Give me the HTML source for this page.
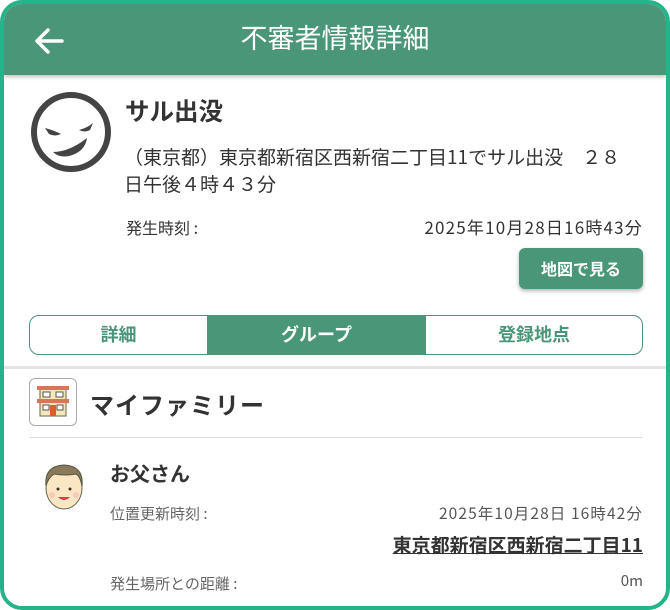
<!DOCTYPE html>
<html><head><meta charset="utf-8"><style>
*{margin:0;padding:0;box-sizing:border-box}
body{width:670px;height:610px;overflow:hidden;background:#fff;font-family:"Noto Sans CJK JP","Liberation Sans",sans-serif;color:#333}
.frame{position:absolute;left:0;top:0;width:670px;height:610px;border:4px solid #25b38a;border-radius:22px;overflow:hidden;background:#fff}
.hdr{position:absolute;left:0;top:0;width:662px;height:71px;background:#4a9679;box-shadow:0 2px 4px rgba(0,0,0,.25)}
.hdr .t{position:absolute;left:0;right:0;top:13px;text-align:center;color:#fff;font-size:27px;line-height:40px}
.a{position:absolute;line-height:1.3}
</style></head><body><div class="frame">
<div class="hdr"><svg class="a" style="left:28px;top:20px" width="34" height="34" viewBox="0 0 34 34"><path d="M30 17H6M16 6L5 17l11 11" stroke="#fff" stroke-width="3.5" fill="none" stroke-linecap="round" stroke-linejoin="round"/></svg><div class="t">不審者情報詳細</div></div>
<svg class="a" style="left:25px;top:86px" width="84" height="84" viewBox="0 0 84 84"><circle cx="42" cy="42" r="37" stroke="#444" stroke-width="6" fill="none"/><path d="M16 38q8 2 16 6q-6 3-12 0z" fill="#444"/><path d="M64 33q-6 5-14 7q6 3 11 0z" fill="#444"/><path d="M24 62q16 0 34-14q-2 14-18 18q-10 2-16-4z" fill="#444"/></svg>
<div class="a" style="left:121px;top:91px;font-size:24.5px;font-weight:bold;color:#333">サル出没</div>
<div class="a" style="left:120px;top:139px;font-size:19px;line-height:27px;width:545px;color:#333;white-space:nowrap">（東京都）東京都新宿区西新宿二丁目11でサル出没　２８<br>日午後４時４３分</div>
<div class="a" style="left:122px;top:213px;font-size:16px;color:#333">発生時刻 :</div>
<div class="a" style="right:23px;top:212px;font-size:17px;letter-spacing:1.2px;color:#333">2025年10月28日16時43分</div>
<div class="a" style="left:515px;top:244px;width:124px;height:41px;background:#4a9679;border-radius:6px;box-shadow:0 2px 4px rgba(0,0,0,.3);color:#fff;font-weight:bold;font-size:16px;text-align:center;line-height:41px">地図で見る</div>
<div class="a" style="left:25px;top:311px;width:614px;height:40px;border:1.5px solid #4a9679;border-radius:10px;overflow:hidden;display:flex;font-weight:bold;font-size:18px;color:#4a9679">
<div style="width:177px;text-align:center;line-height:37px">詳細</div>
<div style="width:219px;text-align:center;line-height:37px;background:#4a9679;color:#fff">グループ</div>
<div style="flex:1;text-align:center;line-height:37px">登録地点</div></div>
<div class="a" style="left:0;top:362px;width:662px;height:3px;background:#e4e4e4"></div>
<div class="a" style="left:25px;top:374px;width:48px;height:48px;border:1px solid #aaa;border-radius:6px;background:#fff">
<svg width="46" height="46" viewBox="0 0 46 46"><rect x="10" y="9" width="26" height="28" fill="#f5e8b8" stroke="#665" stroke-width="1"/><rect x="7" y="7" width="32" height="4" fill="#d9765a"/><rect x="7" y="20" width="32" height="4" fill="#d9765a"/><rect x="13" y="13" width="7" height="5" fill="#fff" stroke="#555"/><rect x="26" y="13" width="7" height="5" fill="#fff" stroke="#555"/><rect x="13" y="26" width="6" height="5" fill="#fff" stroke="#555"/><rect x="27" y="26" width="6" height="5" fill="#fff" stroke="#555"/><rect x="20" y="26" width="6" height="11" fill="#d9602a"/></svg></div>
<div class="a" style="left:86px;top:384px;font-size:24px;font-weight:bold;color:#333;letter-spacing:1px">マイファミリー</div>
<div class="a" style="left:25px;top:433px;width:614px;height:1px;background:#ddd"></div>
<svg class="a" style="left:36px;top:456px" width="48" height="52" viewBox="0 0 48 52"><ellipse cx="24" cy="28" rx="18" ry="21" fill="#fbe6c4" stroke="#665" stroke-width="1"/><path d="M6 26q-2-20 18-21q20 1 18 21q-2-10-6-12q-10 2-22 0q-6 4-8 12z" fill="#8a7a5a" stroke="#554" stroke-width="1"/><circle cx="18" cy="29" r="1.5" fill="#333"/><circle cx="30" cy="29" r="1.5" fill="#333"/><path d="M18 37q6 6 12 0z" fill="#c44"/><circle cx="12" cy="35" r="3" fill="#f8c8b8"/><circle cx="36" cy="35" r="3" fill="#f8c8b8"/></svg>
<div class="a" style="left:106px;top:456px;font-size:20px;font-weight:bold;color:#333">お父さん</div>
<div class="a" style="left:106px;top:500px;font-size:15px;color:#666">位置更新時刻 :</div>
<div class="a" style="right:23px;top:499px;font-size:15.5px;letter-spacing:1.1px;color:#555">2025年10月28日 16時42分</div>
<div class="a" style="right:23px;top:529px;font-size:19px;font-weight:bold;color:#333;text-decoration:underline">東京都新宿区西新宿二丁目11</div>
<div class="a" style="left:106px;top:570px;font-size:15px;color:#666">発生場所との距離 :</div>
<div class="a" style="right:23px;top:567px;font-size:15px;color:#555">0m</div>
</div></body></html>
